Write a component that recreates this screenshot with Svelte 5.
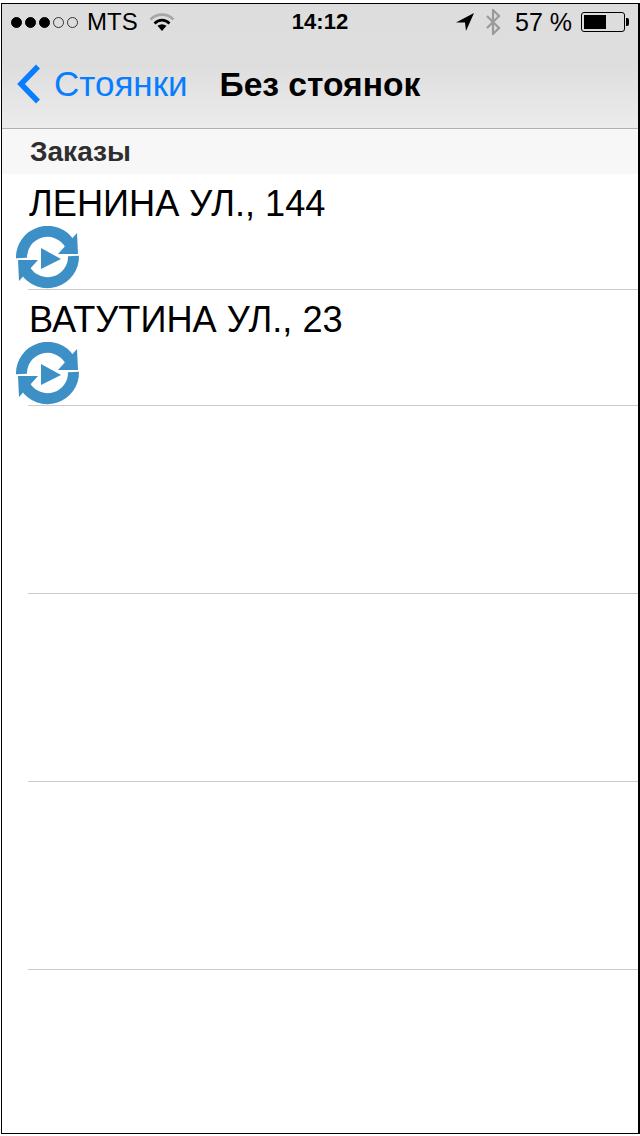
<script>
	let orders = ['ЛЕНИНА УЛ., 144', 'ВАТУТИНА УЛ., 23'];
	let signal = [1, 1, 1, 0, 0];
	let emptyRows = [1, 2, 3];
</script>

<div class="frame">
	<header class="top">
		<div class="status">
			<div class="left">
				<div class="dots">
					{#each signal as on}
						<span class="dot" class:on></span>
					{/each}
				</div>
				<span class="carrier">MTS</span>
				<svg class="wifi" viewBox="0 0 26 20" width="26" height="20">
					<path d="M1.5 7.5 C8 1 18 1 24.500 7.5" fill="none" stroke="#a6a6a6" stroke-width="2.600" />
					<path d="M5.500 11.500 C10 7 16 7 20.500 11.500" fill="none" stroke="#000" stroke-width="2.600" />
					<path d="M8.500 13.800 C11.500 11.600 14.500 11.600 17.500 13.800 L13 19 Z" fill="#000" />
				</svg>
			</div>
			<div class="time">14:12</div>
			<div class="right">
				<svg class="loc" viewBox="0 0 18 18" width="18" height="18">
					<path d="M18 0 L0 9.500 L9 9.500 L10 18 Z" fill="#000" />
				</svg>
				<svg class="bt" viewBox="0 0 16 26" width="16" height="26">
					<path d="M2 7 L14 19 L8 25 L8 1 L14 7 L2 19" fill="none" stroke="#9a9a9a" stroke-width="2.200" />
				</svg>
				<span class="pct">57 %</span>
				<div class="battery"><div class="level" style="width: 57%"></div></div>
				<div class="nub"></div>
			</div>
		</div>
		<div class="nav">
			<svg class="back" viewBox="0 0 26 42" width="26" height="42">
				<path d="M22 3.500 L5 21 L22 38.500" fill="none" stroke="#087dff" stroke-width="5.500" />
			</svg>
			<span class="backlabel">Стоянки</span>
			<span class="title">Без стоянок</span>
		</div>
	</header>

	<div class="section">Заказы</div>

	{#each orders as name}
		<div class="row">
			<div class="name">{name}</div>
			<svg class="sync" viewBox="0 0 64 64" width="64" height="64">
				<path d="M5.500 32 A26 26 0 0 1 53.500 17.500" fill="none" stroke="#3c90c6" stroke-width="11" />
				<path d="M61 7 L62 28 L42 28 Z" fill="#3c90c6" />
				<path d="M57.500 30 A26 26 0 0 1 9.500 44.500" fill="none" stroke="#3c90c6" stroke-width="11" />
				<path d="M3 55 L2 34 L22 34 Z" fill="#3c90c6" />
				<path d="M25 22 L45 33 L25 43 Z" fill="#3c90c6" />
			</svg>
		</div>
	{/each}

	{#each emptyRows as r (r)}
		<div class="empty"></div>
	{/each}
</div>

<style>
	:global(body) {
		background: #fff;
	}

	.frame {
		box-sizing: border-box;
		width: 639px;
		height: 1131px;
		margin: 3px 0 0 1px;
		border: 1px solid #000;
		border-right-width: 2px;
		overflow: hidden;
		background: #fff;
		font-family: "Liberation Sans", Arial, sans-serif;
		color: #000;
	}

	.top {
		height: 125px;
		box-sizing: border-box;
		border-bottom: 1px solid #b2b2b2;
		background: linear-gradient(#dddddd, #dedede 50%, #ececec);
	}

	.status {
		height: 36px;
		display: grid;
		grid-template-columns: 1fr auto 1fr;
		align-items: center;
		font-size: 24px;
	}

	.left {
		display: flex;
		align-items: center;
		padding-left: 9px;
	}

	.dots {
		display: flex;
		gap: 3px;
	}

	.dot {
		box-sizing: border-box;
		width: 11px;
		height: 11px;
		border-radius: 50%;
		border: 1px solid #333;
	}

	.dot.on {
		background: #000;
		border-color: #000;
	}

	.carrier {
		margin-left: 9px;
	}

	.wifi {
		margin-left: 11px;
	}

	.time {
		font-weight: 700;
		font-size: 22px;
	}

	.right {
		display: flex;
		align-items: center;
		justify-content: flex-end;
		padding-right: 9px;
	}

	.bt {
		margin-left: 11px;
	}

	.pct {
		margin-left: 14px;
		font-size: 25px;
	}

	.battery {
		box-sizing: border-box;
		width: 44px;
		height: 20px;
		margin-left: 9px;
		padding: 2px;
		border: 1px solid #000;
		border-radius: 3px;
	}

	.level {
		height: 100%;
		background: #000;
	}

	.nub {
		width: 3px;
		height: 8px;
		margin-left: 1px;
		background: #000;
		border-radius: 0 2px 2px 0;
	}

	.nav {
		display: flex;
		align-items: center;
		height: 88px;
		padding-left: 14px;
	}

	.back {
		flex: none;
	}

	.backlabel {
		margin-left: 12px;
		font-size: 35px;
		color: #087dff;
	}

	.title {
		margin: 2px 0 0 32px;
		font-size: 33.600px;
		font-weight: 700;
	}

	.section {
		box-sizing: border-box;
		height: 45px;
		padding: 7px 0 0 28px;
		background: #f7f7f7;
		font-size: 28px;
		font-weight: 700;
		color: #2e2e2e;
	}

	.row {
		height: 116px;
		box-sizing: border-box;
		position: relative;
		overflow: visible;
	}

	.row::after,
	.empty::after {
		content: "";
		position: absolute;
		left: 26px;
		right: 0;
		bottom: 0;
		height: 1px;
		background: #cbcbcb;
	}

	.name {
		padding: 9px 0 0 27px;
		font-size: 36.200px;
		line-height: 42px;
	}

	.sync {
		display: block;
		margin: 1px 0 0 14px;
		position: relative;
		z-index: 1;
	}

	.empty {
		height: 188px;
		position: relative;
	}
</style>
